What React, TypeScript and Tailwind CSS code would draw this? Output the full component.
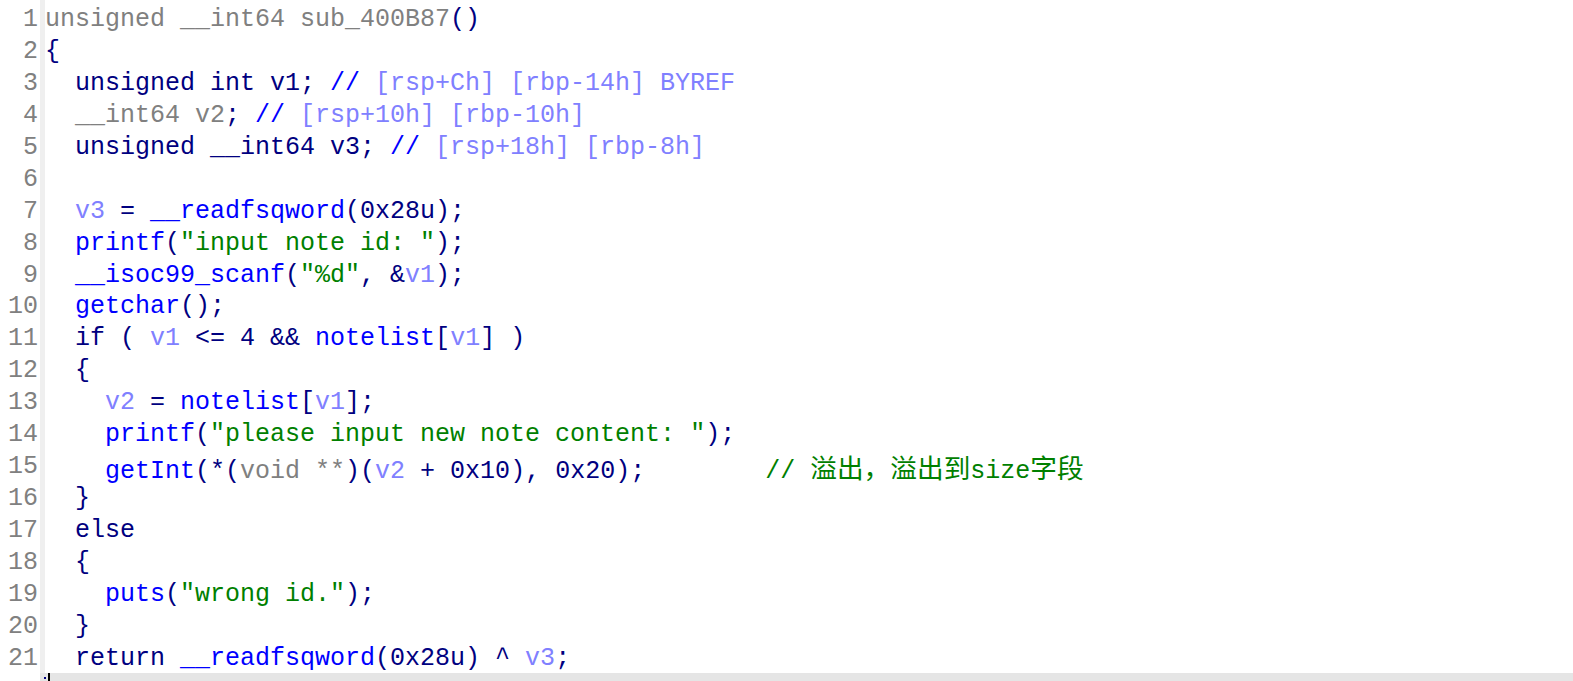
import React from "react";

type Seg = [string, string];

const N = "text-[#000080]";
const B = "text-[#0000ff]";
const G = "text-[#808080]";
const P = "text-[#8080ff]";
const S = "text-[#008000]";

const lines: Seg[][] = [
  [[G, "unsigned __int64 sub_400B87"], [N, "()"]],
  [[N, "{"]],
  [[N, "  unsigned int v1; "], [B, "//"], [P, " [rsp+Ch] [rbp-14h] BYREF"]],
  [[G, "  __int64 v2"], [N, "; "], [B, "//"], [P, " [rsp+10h] [rbp-10h]"]],
  [[N, "  unsigned __int64 v3; "], [B, "//"], [P, " [rsp+18h] [rbp-8h]"]],
  [],
  [[P, "  v3"], [N, " = "], [B, "__readfsqword"], [N, "(0x28u);"]],
  [[B, "  printf"], [N, "("], [S, "\"input note id: \""], [N, ");"]],
  [[B, "  __isoc99_scanf"], [N, "("], [S, "\"%d\""], [N, ", &"], [P, "v1"], [N, ");"]],
  [[B, "  getchar"], [N, "();"]],
  [[N, "  if ( "], [P, "v1"], [N, " <= 4 && "], [B, "notelist"], [N, "["], [P, "v1"], [N, "] )"]],
  [[N, "  {"]],
  [[P, "    v2"], [N, " = "], [B, "notelist"], [N, "["], [P, "v1"], [N, "];"]],
  [[B, "    printf"], [N, "("], [S, "\"please input new note content: \""], [N, ");"]],
  [
    [B, "    getInt"],
    [N, "(*("],
    [G, "void **"],
    [N, ")("],
    [P, "v2"],
    [N, " + 0x10), 0x20);"],
    [N, "        "],
    [S, "// "],
    ["cjk", "溢出，溢出到"],
    [S, "size"],
    ["cjk", "字段"],
  ],
  [[N, "  }"]],
  [[N, "  else"]],
  [[N, "  {"]],
  [[B, "    puts"], [N, "("], [S, "\"wrong id.\""], [N, ");"]],
  [[N, "  }"]],
  [[N, "  return "], [B, "__readfsqword"], [N, "(0x28u) ^ "], [P, "v3"], [N, ";"]],
];

export default function App() {
  return (
    <div
      className="w-[1573px] h-[681px] bg-white flex flex-col overflow-hidden"
      style={{ fontFamily: '"Liberation Mono", "Noto Sans CJK SC", monospace' }}
    >
      <div className="flex flex-1 min-h-0">
        <div className="w-[40px] pt-[4px] pr-[2px] text-right text-[25px] leading-[31.95px] text-[#808080]">
          {lines.map((_, i) => (
            <div key={i} className="h-[31.95px]">{i + 1}</div>
          ))}
        </div>
        <div className="w-[5px] bg-[#efefef]" />
        <div className="flex-1 pt-[4px] text-[25px] leading-[31.95px] whitespace-pre">
          {lines.map((segs, i) => (
            <div key={i} className="h-[31.95px]">
              {segs.map(([c, t], j) =>
                c === "cjk" ? (
                  <span
                    key={j}
                    className="text-[#008000] text-[26.7px]"
                    style={{ fontFamily: '"Noto Sans CJK SC", sans-serif' }}
                  >
                    {t}
                  </span>
                ) : (
                  <span key={j} className={c}>
                    {t}
                  </span>
                )
              )}
            </div>
          ))}
        </div>
      </div>
      <div className="h-[8px] flex">
        <div className="w-[40px] bg-white" />
        <div className="flex-1 bg-[#e5e5e5] relative">
          <div className="absolute left-[4px] top-[4px] w-[2px] h-[2px] bg-[#000080]" />
          <div className="absolute left-[8px] top-0 w-[2px] h-[8px] bg-black" />
        </div>
      </div>
    </div>
  );
}
